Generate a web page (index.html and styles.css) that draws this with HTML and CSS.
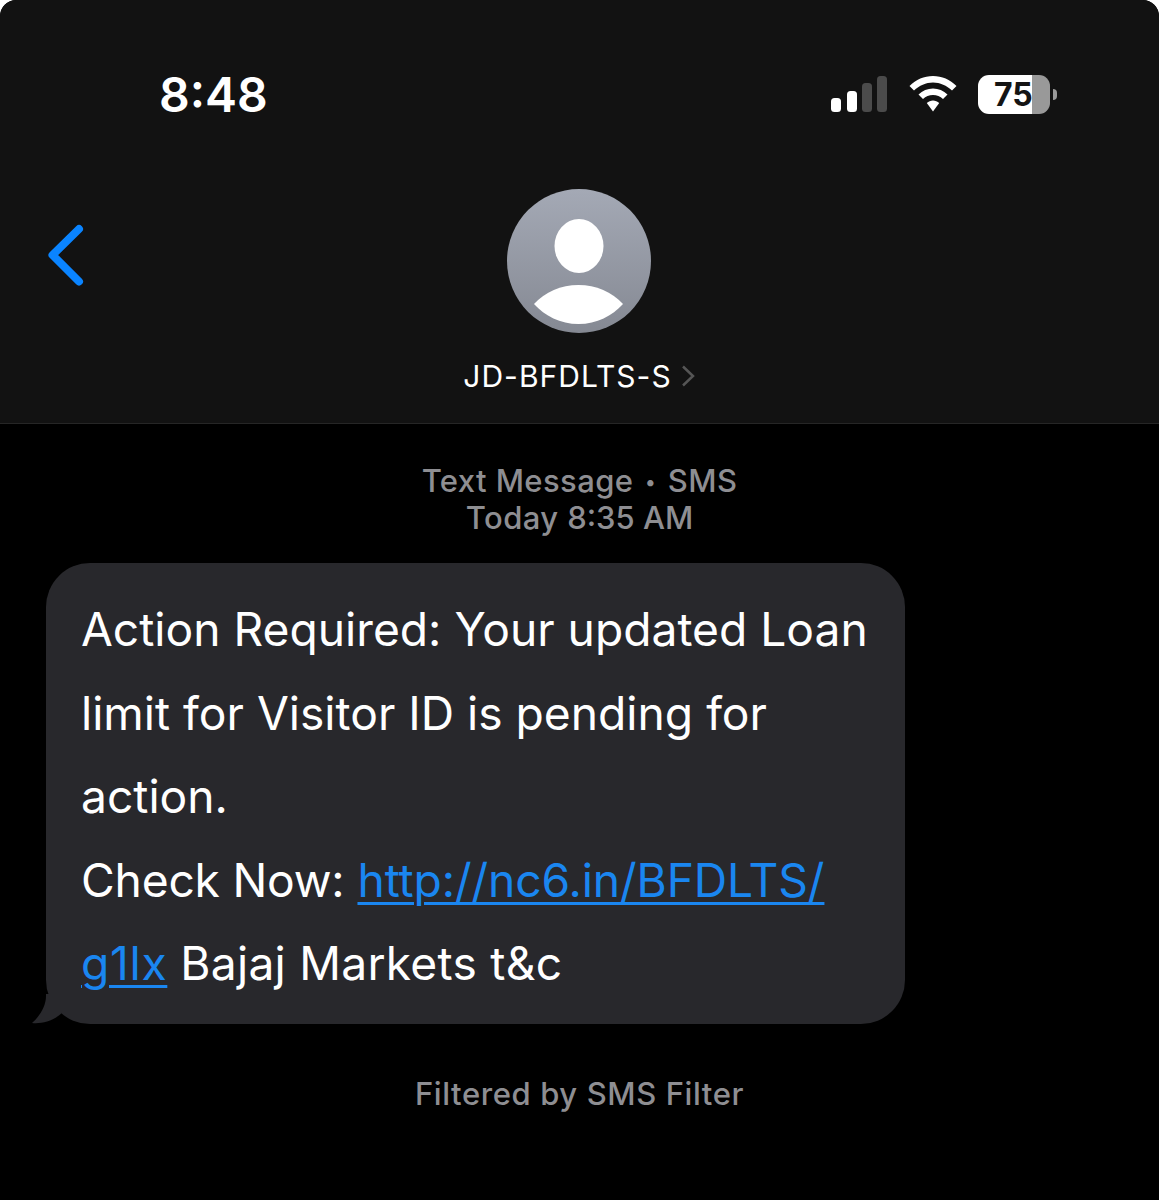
FILE: index.html
```html
<!DOCTYPE html>
<html lang="en">
<head>
    <meta charset="UTF-8">
    <meta name="viewport" content="width=device-width, initial-scale=1.0">
    <title>JD-BFDLTS-S</title>
    <link rel="stylesheet" href="styles.css">
</head>
<body>
    <div class="screen">
        <header class="top">
            <div class="status-bar">
                <span class="time">8:48</span>
                <div class="status-icons">
                    <svg class="signal" width="56" height="36" viewBox="0 0 56 36">
                        <rect x="0" y="22" width="10" height="14" rx="3.500" fill="#fff"/>
                        <rect x="16" y="15" width="10" height="21" rx="3.500" fill="#fff"/>
                        <rect x="31" y="7" width="10" height="29" rx="3.500" fill="#4b4b4b"/>
                        <rect x="46" y="0" width="10" height="36" rx="3.500" fill="#4b4b4b"/>
                    </svg>
                    <svg class="wifi" width="48" height="36" viewBox="0 0 48 36">
                        <path d="M24 0C15 0 7 3.500 0.500 10L5 14.500C10.200 9.500 17 6.500 24 6.500C31 6.500 37.800 9.500 43 14.500L47.500 10C41 3.500 33 0 24 0Z" fill="#fff"/>
                        <path d="M24 12.500C18.500 12.500 13.500 14.800 9.500 18.500L14 23C16.700 20.500 20.200 19 24 19C27.800 19 31.300 20.500 34 23L38.500 18.500C34.500 14.800 29.500 12.500 24 12.500Z" fill="#fff"/>
                        <path d="M24 24.500C21.700 24.500 19.500 25.400 17.800 26.900L24 35.500L30.200 26.900C28.500 25.400 26.300 24.500 24 24.500Z" fill="#fff"/>
                    </svg>
                    <div class="battery">
                        <div class="battery-body">
                            <span class="battery-level">75</span>
                        </div>
                        <div class="battery-cap"></div>
                    </div>
                </div>
            </div>
            <div class="contact-row">
                <svg class="back" width="38" height="64" viewBox="0 0 38 64">
                    <path d="M32 6L5.500 32L32 58.500" fill="none" stroke="#0a84ff" stroke-width="8" stroke-linecap="round" stroke-linejoin="round"/>
                </svg>
                <div class="contact">
                    <svg class="avatar" width="144" height="144" viewBox="0 0 144 144">
                        <defs>
                            <linearGradient id="avatarFill" x1="0" y1="0" x2="0" y2="1">
                                <stop offset="0" stop-color="#a4a9b5"/>
                                <stop offset="1" stop-color="#858993"/>
                            </linearGradient>
                        </defs>
                        <circle cx="72" cy="72" r="72" fill="url(#avatarFill)"/>
                        <ellipse cx="72" cy="57" rx="24.500" ry="27" fill="#fff"/>
                        <path d="M27 115C38 103 54 96 71.500 96C89 96 105 103 116 115C105 127 90 135 71.500 135C53 135 38 127 27 115Z" fill="#fff"/>
                    </svg>
                    <div class="contact-name">
                        <span>JD-BFDLTS-S</span>
                        <svg class="chevron" width="14" height="22" viewBox="0 0 14 22">
                            <path d="M2 1.500L12 11L2 20.500" fill="none" stroke="#555" stroke-width="2.500"/>
                        </svg>
                    </div>
                </div>
            </div>
        </header>

        <main class="thread">
            <div class="meta">
                <div>Text Message <span class="meta-dot">•</span> SMS</div>
                <div>Today <span class="meta-time">8:35 AM</span></div>
            </div>
            <div class="bubble-row">
                <div class="bubble">
                    <svg class="tail" width="40" height="30" viewBox="0 0 40 30">
                        <path d="M14 0L14 2C14 12 8 22 0 29C10 30 22 27 31 18L40 0Z" fill="#28282c"/>
                    </svg>
                    Action Required: Your updated Loan limit for Visitor ID is pending for action.<br>
                    <span class="check-now">Check Now:</span> <a class="link link-url" href="#">http://nc6.in/BFDLTS/</a><br>
                    <a class="link link-end" href="#">g1lx</a> <span class="bubble-end">Bajaj Markets t&amp;c</span>
                </div>
            </div>
            <div class="filter-note">Filtered by SMS Filter</div>
        </main>
    </div>
</body>
</html>
```

FILE: styles.css
```css
html {
    background-color: #ffffff;
}
body {
    margin: 0;
    font-family: Inter, 'Noto Sans', sans-serif;
    color: #ffffff;
}
.screen {
    background-color: #000000;
    border-radius: 16px 16px 0 0;
    height: 1200px;
    overflow: hidden;
}
.top {
    background-color: #121212;
    height: 423px;
    border-bottom: 1px solid #262626;
    border-radius: 16px 16px 0 0;
}
.status-bar {
    display: flex;
    justify-content: space-between;
    height: 72px;
    padding: 59px 102px 59px 159px;
    margin-bottom: -190px;
}
.time {
    font-size: 48px;
    font-weight: 600;
    line-height: 72px;
}
.status-icons {
    display: flex;
    align-items: center;
    gap: 21px;
    height: 72px;
    margin-top: -1px;
}
.signal {
    margin-right: 1px;
}
.battery {
    display: flex;
    align-items: center;
    gap: 3px;
}
.battery-body {
    width: 72px;
    height: 39px;
    border-radius: 11px;
    background: linear-gradient(to right, #ffffff 0, #ffffff 54px, #999999 54px);
    color: #141414;
    font-size: 32px;
    font-weight: 700;
    line-height: 39px;
    padding-left: 16px;
    box-sizing: border-box;
}
.battery-cap {
    width: 4px;
    height: 11px;
    background-color: #999999;
    border-radius: 0 4px 4px 0;
}
.contact-row {
    position: relative;
    display: flex;
    justify-content: center;
    padding-top: 189px;
}
.back {
    position: absolute;
    left: 47px;
    top: 223px;
}
.contact {
    display: flex;
    flex-direction: column;
    align-items: center;
    margin-left: -1px;
}
.avatar {
    display: block;
}
.contact-name {
    display: flex;
    align-items: center;
    gap: 9px;
    margin-top: 22px;
    font-size: 30px;
    letter-spacing: 1px;
    line-height: 42px;
}
.thread {
    padding-top: 38px;
}
.meta {
    text-align: center;
    color: #8e8e92;
    font-size: 31px;
    font-weight: 500;
    letter-spacing: 0.400px;
    line-height: 37px;
}
.meta-dot {
    font-size: 20px;
    line-height: 0;
    vertical-align: 3px;
    padding: 0 3px;
}
.meta-time {
    letter-spacing: 0;
}
.bubble-row {
    margin-top: 27px;
    padding-left: 46px;
}
.bubble {
    position: relative;
    box-sizing: border-box;
    width: 859px;
    height: 461px;
    padding: 25px 30px 0 35px;
    background-color: #28282c;
    border-radius: 44px;
    font-size: 46.200px;
    line-height: 83.500px;
}
.tail {
    position: absolute;
    left: -14px;
    bottom: 0;
}
.check-now {
    letter-spacing: -0.200px;
}
.link {
    color: #1a86f0;
    text-decoration: underline;
    text-decoration-thickness: 3px;
    text-underline-offset: 5px;
}
.link-url {
    letter-spacing: -0.100px;
}
.link-end {
    letter-spacing: 0.700px;
}
.bubble-end {
    letter-spacing: 0.250px;
}
.filter-note {
    margin-top: 51px;
    text-align: center;
    color: #8e8e92;
    font-size: 31px;
    font-weight: 500;
    letter-spacing: 0.600px;
    line-height: 37px;
}
```
